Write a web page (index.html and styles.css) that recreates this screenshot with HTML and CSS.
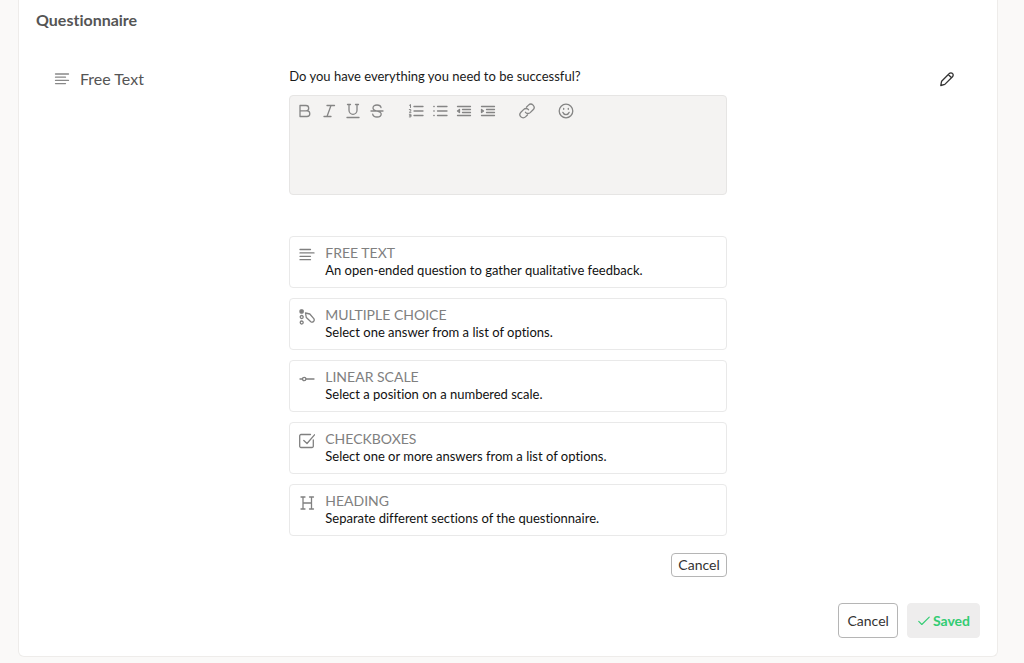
FILE: index.html
```html
<!DOCTYPE html>
<html lang="en">
<head>
  <meta charset="UTF-8">
  <meta name="viewport" content="width=device-width, initial-scale=1">
  <title>Questionnaire</title>
  <link rel="stylesheet" href="styles.css">
</head>
<body>

  <main class="card">
    <h2 class="title">Questionnaire</h2>

    <section class="question">
      <div class="question-type">
        <svg class="icon" viewBox="0 0 16 16"><path d="M1.500 3h13M1.500 6.200h10M1.500 9.400h13M1.500 12.600h10"/></svg>
        <span>Free Text</span>
      </div>

      <div class="question-body">
        <label class="question-label" for="answer">Do you have everything you need to be successful?</label>

        <div class="editor">
          <div class="toolbar">
            <button type="button" aria-label="Bold"><svg class="icon" viewBox="0 0 16 16"><path d="M3 2.500h6a2.700 2.700 0 0 1 0 5.400H3zM3 7.900h7a2.800 2.800 0 0 1 0 5.600H3z"/></svg></button>
            <button type="button" aria-label="Italic"><svg class="icon" viewBox="0 0 16 16"><path d="M6 2.500h7.500M3 13.500h7M10 2.500l-4 11"/></svg></button>
            <button type="button" aria-label="Underline"><svg class="icon" viewBox="0 0 16 16"><path d="M2.500 1.500h3M10.500 1.500h3M4 1.500v5.800a4 4 0 0 0 8 0V1.500M2 14.500h12"/></svg></button>
            <button type="button" aria-label="Strikethrough"><svg class="icon" viewBox="0 0 16 16"><path d="M12 4.500C11.700 2.700 10.300 2 8 2 5.500 2 4 3.200 4 5c0 4.200 8.200 2 8.200 6 0 1.900-1.600 3-4.200 3-2.500 0-4-.9-4.300-2.900M2 8h12"/></svg></button>
            <span class="gap"></span>
            <button type="button" aria-label="Numbered list"><svg class="icon" viewBox="0 0 16 16"><path d="M6 3.500h9M6 8h9M6 12.500h9"/><path class="thin" d="M1.500 2.300l1-.8v3M1.300 6.600h1.500v1.300L1.300 9.300H3M1.300 11.300h1.600v2.600H1.300M1.600 12.600h1.300"/></svg></button>
            <button type="button" aria-label="Bulleted list"><svg class="icon" viewBox="0 0 16 16"><path d="M5.500 3.500H15M5.500 8H15M5.500 12.500H15M1.800 3.500h.4M1.800 8h.4M1.800 12.500h.4"/></svg></button>
            <button type="button" aria-label="Decrease indent"><svg class="icon" viewBox="0 0 16 16"><path d="M1.500 3.500h13M6.500 6.500h8M6.500 9.500h8M1.500 12.500h13"/><path class="solid" d="M3.500 6.500v3L1.500 8z"/></svg></button>
            <button type="button" aria-label="Increase indent"><svg class="icon" viewBox="0 0 16 16"><path d="M1.500 3.500h13M6.500 6.500h8M6.500 9.500h8M1.500 12.500h13"/><path class="solid" d="M1.500 6.500v3L3.500 8z"/></svg></button>
            <span class="gap"></span>
            <button type="button" aria-label="Link"><svg class="icon" viewBox="0 0 16 16"><path d="M6.500 9.300a3.200 3.200 0 0 0 4.700.3l2.900-2.900a3.200 3.200 0 0 0-4.600-4.600L7.600 4M9.500 6.700a3.200 3.200 0 0 0-4.700-.3L1.900 9.300a3.200 3.200 0 0 0 4.600 4.600L8.400 12"/></svg></button>
            <span class="gap"></span>
            <button type="button" aria-label="Emoji"><svg class="icon" viewBox="0 0 16 16"><circle cx="8" cy="8" r="6.800"/><path d="M4.800 9.300c1 3 5.400 3 6.400 0M5.700 5.300v1M10.300 5.300v1"/></svg></button>
          </div>
          <textarea class="answer" id="answer" disabled></textarea>
        </div>

        <div class="options">
          <button type="button" class="option">
            <svg class="icon" viewBox="0 0 16 16"><path d="M1 2.500h10.500M1 5.900h14M1 9.300h10.500M1 12.700h10.500"/></svg>
            <span class="option-text"><span class="option-name">FREE TEXT</span>An open-ended question to gather qualitative feedback.</span>
          </button>
          <button type="button" class="option">
            <svg class="icon" viewBox="0 0 16 16"><rect class="solid" x="1" y=".8" width="3.200" height="3.200" rx="1"/><circle cx="2.700" cy="8" r="1.500"/><circle cx="2.700" cy="13.500" r="1.500"/><path d="M6.500 4l4.300 1 4 4.700c1.300 2-1 4.300-3 3L7.300 8.500z"/></svg>
            <span class="option-text"><span class="option-name">MULTIPLE CHOICE</span>Select one answer from a list of options.</span>
          </button>
          <button type="button" class="option">
            <svg class="icon" viewBox="0 0 16 16"><path d="M1 8h2.500M7 8h8"/><circle cx="5.200" cy="8" r="1.700"/></svg>
            <span class="option-text"><span class="option-name">LINEAR SCALE</span>Select a position on a numbered scale.</span>
          </button>
          <button type="button" class="option">
            <svg class="icon" viewBox="0 0 16 16"><path d="M11.500 1.500H2a1.300 1.300 0 0 0-1.300 1.300v10.400A1.300 1.300 0 0 0 2 14.500h11a1.300 1.300 0 0 0 1.300-1.300V7M4.800 7.500L8 10.500l7.500-8.700"/></svg>
            <span class="option-text"><span class="option-name">CHECKBOXES</span>Select one or more answers from a list of options.</span>
          </button>
          <button type="button" class="option">
            <svg class="icon" viewBox="0 0 16 16"><path d="M2 2h4M10.500 2h4M2 14h4M10.500 14h4M4 2v12M12.500 2v12M4 8h8.500"/></svg>
            <span class="option-text"><span class="option-name">HEADING</span>Separate different sections of the questionnaire.</span>
          </button>
        </div>

        <div class="question-actions">
          <button type="button" class="btn btn-small">Cancel</button>
        </div>
      </div>

      <button type="button" class="edit" aria-label="Edit question">
        <svg class="icon" viewBox="0 0 16 16"><path d="M1.800 14.500l.8-4.300 7.700-7.700a2.200 2.200 0 0 1 3.200 0 2.200 2.200 0 0 1 0 3.200l-7.700 7.700zM9.300 3.500l3.200 3.200"/></svg>
      </button>
    </section>

    <footer class="footer">
      <button type="button" class="btn">Cancel</button>
      <button type="button" class="btn btn-saved">
        <svg class="icon" viewBox="0 0 16 16"><path d="M2 8.500L5.500 12 14 3.500"/></svg>
        Saved
      </button>
    </footer>
  </main>

</body>
</html>
```
FILE: styles.css
```css
* { box-sizing: border-box; }
body { margin: 0; padding: 0 26px 6px 18px; background: #faf9f8; color: #1a1a1a; font-family: Lato, "Liberation Sans", sans-serif; font-size: 14px; line-height: 18px; font-variant-ligatures: none; }
button { font: inherit; font-variant-ligatures: none; color: inherit; cursor: pointer; }

.card { padding: 10px 17px 18px; background: #fff; border: 1px solid #eeecea; border-top: none; border-radius: 0 0 6px 6px; }
.title { margin: 0; font-size: 16px; line-height: 20px; font-weight: 700; color: #555; }

.icon { width: 16px; height: 16px; flex: none; fill: none; stroke: currentColor; stroke-width: 1.3; stroke-linecap: round; stroke-linejoin: round; }
.icon .thin { stroke-width: 1; }
.icon .solid { fill: currentColor; }

.question { display: grid; grid-template-columns: 11fr 19fr 11fr; align-items: start; padding-top: 36px; }
.question-type { display: flex; align-items: center; gap: 10px; padding: 3px 0 0 18px; font-size: 16px; line-height: 20px; color: #555; }
.question-type .icon { color: #888; }
.question-label { display: block; margin-bottom: 8px; font-size: 13px; line-height: 21px; }

.editor { background: #f4f3f2; border: 1px solid #e6e5e4; border-radius: 4px; }
.toolbar { display: flex; gap: 8px; padding: 7px 7px 0; color: #858585; }
.toolbar button { display: flex; padding: 0; border: none; background: none; }
.toolbar .gap { width: 7px; }
.answer { display: block; width: 100%; height: 75px; padding: 8px; border: none; background: none; resize: none; font: inherit; }

.options { display: flex; flex-direction: column; gap: 10px; margin-top: 41px; }
.option { display: flex; gap: 10px; padding: 7px 9px 8px; border: 1px solid #e9e9e9; border-radius: 4px; background: #fff; font-size: 13px; line-height: 17px; text-align: left; }
.option .icon { margin-top: 3px; color: #808080; }
.option-text { color: #111; }
.option-name { display: block; font-size: 14px; line-height: 18px; color: #808080; }

.question-actions { display: flex; justify-content: flex-end; margin-top: 17px; }
.edit { justify-self: end; display: flex; margin: 5px 25px 0 0; padding: 0; border: none; background: none; color: #333; }

.footer { display: flex; justify-content: flex-end; gap: 9px; margin-top: 26px; }
.btn { display: flex; align-items: center; gap: 2px; height: 35px; padding: 0 8px; border: 1px solid #b5b5b5; border-radius: 4px; background: #fff; color: #333; }
.btn-small { height: 24px; padding: 0 6px; }
.btn-saved { padding: 0 9px; border-color: #eeeded; background: #eeeded; color: #33cc73; font-weight: 700; }
.btn-saved .icon { width: 14px; height: 14px; }
```
